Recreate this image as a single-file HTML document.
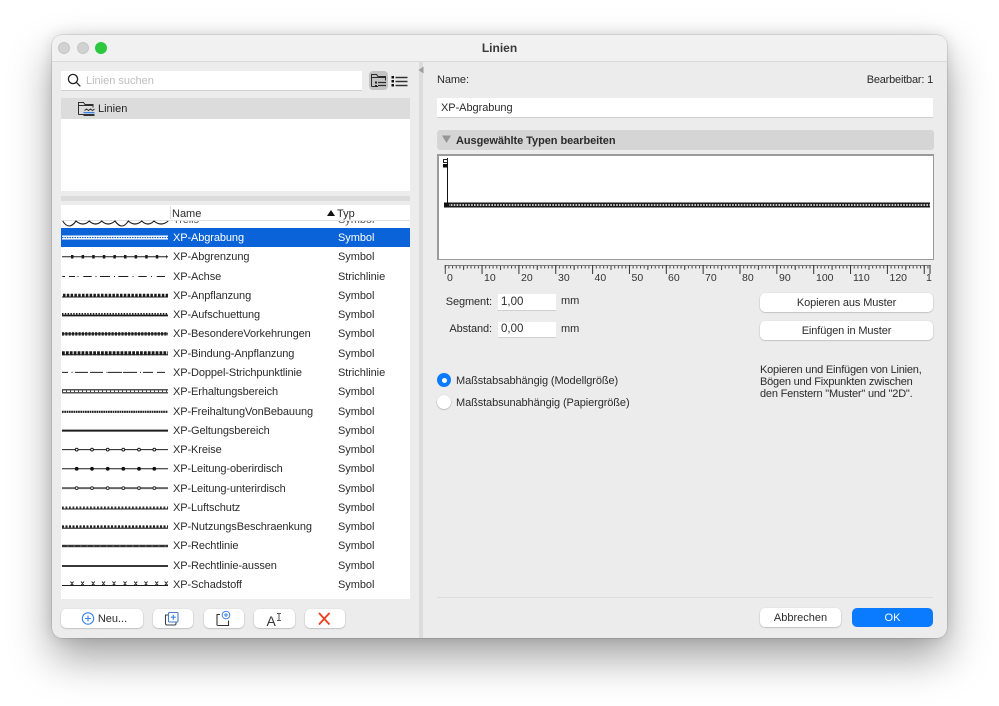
<!DOCTYPE html>
<html><head><meta charset="utf-8">
<style>
html,body{margin:0;padding:0;background:#fff;width:999px;height:706px;overflow:hidden}
body{font-family:"Liberation Sans",sans-serif;font-size:11px;color:#2b2b2b;position:relative}
div,span{position:absolute;white-space:nowrap;box-sizing:border-box}
#win{left:52px;top:35px;width:895px;height:603px;background:#ececec;border-radius:10px;box-shadow:0 0 0 .5px rgba(0,0,0,.18),0 20px 42px rgba(0,0,0,.36),0 0 14px rgba(0,0,0,.12)}
.abs{left:0;top:0}
.w{background:#fff}
.btn{background:#fff;border-radius:5px;box-shadow:0 .5px 1.5px rgba(0,0,0,.3);text-align:center;line-height:21px;color:#2b2b2b}
.inp{background:#fff;box-shadow:0 1px 0 #cfcfcf;line-height:16px;padding-left:3px;font-size:11.5px}
.r{left:61px;width:349px;height:19px;line-height:21px}
.n{left:112px;top:0;letter-spacing:-.1px}
.t{left:277px;top:0;letter-spacing:-.05px}
.lab{line-height:14px;letter-spacing:-.1px}
.rl{font-size:10.5px;line-height:14px;color:#333;top:271px}
</style></head><body>
<div id="win"></div>
<div style="left:52px;top:35px;width:895px;height:27px;background:#f1f1f1;border-radius:10px 10px 0 0;border-bottom:1px solid #dadada;text-align:center;font-weight:bold;font-size:12px;line-height:26px;color:#3a3a3a">Linien</div>
<div style="left:58px;top:42px;width:12px;height:12px;border-radius:50%;background:#d2d2d2;border:.5px solid #c6c6c6"></div>
<div style="left:77px;top:42px;width:12px;height:12px;border-radius:50%;background:#d2d2d2;border:.5px solid #c6c6c6"></div>
<div style="left:95px;top:42px;width:12px;height:12px;border-radius:50%;background:#2bc840"></div>

<!-- splitter -->
<div style="left:419px;top:62px;width:4px;height:576px;background:#dcdcdc"></div>
<svg class="abs" style="position:absolute" width="999" height="706">
<path d="M418.500 70l5-3.500v7z" fill="#9d9d9d"/>
</svg>

<!-- search -->
<div class="w" style="left:61px;top:71px;width:301px;height:19px;box-shadow:0 1px 0 #cfcfcf"></div>
<div style="left:86px;top:74px;line-height:14px;color:#bdbdbd;letter-spacing:0">Linien suchen</div>
<svg style="position:absolute;left:66px;top:72px" width="16" height="16" fill="none" stroke="#222" stroke-width="1.300"><circle cx="7" cy="7" r="4.600"/><path d="M10.300 10.300l4 4"/></svg>
<div style="left:369px;top:71px;width:19px;height:19px;border-radius:4px;background:#c3c3c3"></div>
<svg style="position:absolute;left:369px;top:71px" width="40" height="19" fill="none" stroke="#2c2c2c">
<path d="M2.500 15.500v-12h5l1.500 2h7.500v4M2.500 6.500h14M9 15.500h-6.500" stroke-width="1"/>
<path d="M9 11.500h8M9 14.500h8" stroke-width="1.200"/><rect x="6" y="10.500" width="2" height="2" fill="#222" stroke="none"/><rect x="6" y="14" width="2" height="2" fill="#222" stroke="none"/>
<path d="M26.500 6.500h12M26.500 10.500h12M26.500 14.500h12" stroke-width="1.500" stroke="#333"/>
<rect x="22.500" y="5" width="2.500" height="2.500" fill="#111" stroke="none"/><rect x="22.500" y="9" width="2.500" height="2.500" fill="#111" stroke="none"/><rect x="22.500" y="13" width="2.500" height="2.500" fill="#111" stroke="none"/>
</svg>

<!-- tree -->
<div class="w" style="left:61px;top:98px;width:349px;height:93px"></div>
<div style="left:61px;top:98px;width:349px;height:21px;background:#dcdcdc"></div>
<svg style="position:absolute;left:77px;top:100px" width="20" height="18" fill="none" stroke="#2f2f2f" stroke-width="1">
<path d="M1.500 14.500v-12h5l1.500 2h8v3M1.500 14.500h5M1.500 5.500h14"/>
<path d="M7.500 10.500l2-1.500 2 1.500 2-1.500 2 1.500 2-1.500"/>
<rect x="6.500" y="12" width="11" height="1.300" fill="#3d83e6" stroke="none"/><rect x="6.500" y="14" width="11" height="2" fill="#333" stroke="none"/>
</svg>
<div style="left:98px;top:102px;line-height:15px;letter-spacing:0;color:#222">Linien</div>
<div style="left:61px;top:196px;width:349px;height:5px;background:#dcdcdc"></div>

<!-- list -->
<div class="w" style="left:61px;top:205px;width:349px;height:394px"></div>
<div style="left:61px;top:220px;width:349px;height:1px;background:#e2e2e2"></div>
<div style="left:172px;top:207px;line-height:14px;letter-spacing:0">Name</div>
<div style="left:170px;top:206px;width:1px;height:13px;background:#dedede"></div>
<div style="left:337px;top:207px;line-height:14px;letter-spacing:0">Typ</div>
<svg style="position:absolute;left:326px;top:209px" width="10" height="8"><path d="M1 7l4-6 4 6z" fill="#111"/></svg>

<div style="left:61px;top:221px;width:349px;height:378px;overflow:hidden">
<div class="r" style="left:0;top:-11.300px;color:#555"><span class="n">Trelis</span><span class="t">Symbol</span></div>
<div style="left:0;top:7px;width:349px;height:19px;background:#0a63d8"></div>
</div>
<div class="r" style="top:228px;color:#fff"><span class="n">XP-Abgrabung</span><span class="t">Symbol</span></div>
<div class="r" style="top:247.300px"><span class="n">XP-Abgrenzung</span><span class="t">Symbol</span></div>
<div class="r" style="top:266.600px"><span class="n">XP-Achse</span><span class="t">Strichlinie</span></div>
<div class="r" style="top:285.800px"><span class="n">XP-Anpflanzung</span><span class="t">Symbol</span></div>
<div class="r" style="top:305.100px"><span class="n">XP-Aufschuettung</span><span class="t">Symbol</span></div>
<div class="r" style="top:324.400px"><span class="n">XP-BesondereVorkehrungen</span><span class="t">Symbol</span></div>
<div class="r" style="top:343.700px"><span class="n">XP-Bindung-Anpflanzung</span><span class="t">Symbol</span></div>
<div class="r" style="top:362.900px"><span class="n">XP-Doppel-Strichpunktlinie</span><span class="t">Strichlinie</span></div>
<div class="r" style="top:382.200px"><span class="n">XP-Erhaltungsbereich</span><span class="t">Symbol</span></div>
<div class="r" style="top:401.500px"><span class="n">XP-FreihaltungVonBebauung</span><span class="t">Symbol</span></div>
<div class="r" style="top:420.800px"><span class="n">XP-Geltungsbereich</span><span class="t">Symbol</span></div>
<div class="r" style="top:440px"><span class="n">XP-Kreise</span><span class="t">Symbol</span></div>
<div class="r" style="top:459.300px"><span class="n">XP-Leitung-oberirdisch</span><span class="t">Symbol</span></div>
<div class="r" style="top:478.600px"><span class="n">XP-Leitung-unterirdisch</span><span class="t">Symbol</span></div>
<div class="r" style="top:497.900px"><span class="n">XP-Luftschutz</span><span class="t">Symbol</span></div>
<div class="r" style="top:517.100px"><span class="n">XP-NutzungsBeschraenkung</span><span class="t">Symbol</span></div>
<div class="r" style="top:536.400px"><span class="n">XP-Rechtlinie</span><span class="t">Symbol</span></div>
<div class="r" style="top:555.700px"><span class="n">XP-Rechtlinie-aussen</span><span class="t">Symbol</span></div>
<div class="r" style="top:575px"><span class="n">XP-Schadstoff</span><span class="t">Symbol</span></div>

<!-- samples -->
<svg style="position:absolute;left:0;top:0" width="420" height="706" fill="none" stroke="#1c1c1c">
<!-- scallops -->
<path d="M62.700 221Q69 231 76 221Q83 227 89.300 221Q95.500 227 101.700 221Q108 227 115 221Q122 231 128.300 221Q135 227 141.700 221Q148 227 154 221Q161 227 168.300 221" stroke-width="1.100"/>
<!-- Abgrabung -->
<path d="M62 237.500h106" stroke="#fff" stroke-width="4"/>
<path d="M62 237.500h106" stroke="#0a63d8" stroke-width="1.300" stroke-dasharray="1.500 1"/>
<!-- Abgrenzung -->
<path d="M62 256.800h106" stroke-width="1"/>
<path d="M71 256.800h96" stroke-width="3.500" stroke-dasharray="2.500 8.100"/>
<!-- Achse -->
<path d="M62.300 276.500h2.700M69 276.500h6M77.500 276.500h1M83.300 276.500h8.400M95.500 276.500h1M100 276.500h10M114 276.500h1M118.300 276.500h10M132.500 276.500h1M138.300 276.500h8.400M151 276.500h1M156.700 276.500h8.300" stroke-width="1"/>
<!-- Anpflanzung -->
<path d="M62 297h106" stroke-width="1"/>
<path d="M63 295.300h105" stroke-width="3" stroke-dasharray="2.500 1.300"/>
<!-- Aufschuettung -->
<path d="M62 315.500h106" stroke-width="1.800"/>
<path d="M62 313.800h106" stroke-width="1.500" stroke-dasharray="1.500 1.300"/>
<!-- Besondere -->
<path d="M62 333.900h106" stroke-width="3.500" stroke-dasharray="2.200 1.100" stroke="#333"/>
<path d="M62 333.900h106" stroke-width="1" stroke="#111"/>
<!-- Bindung -->
<path d="M62 353.200h106" stroke-width="4" stroke-dasharray="2.800 1.100"/>
<path d="M62 354.800h106" stroke-width="1"/>
<!-- Doppel -->
<path d="M62 372.400h6M71.500 372.400h1M75 372.400h13M90 372.400h13M106.500 372.400h1M108 372.400h14M123 372.400h14M140 372.400h1M143 372.400h10M157 372.400h8" stroke-width="1"/>
<!-- Erhaltung -->
<path d="M62 389.800h106M62 392.800h106" stroke-width="1.200"/>
<path d="M62 391.300h106" stroke-width="1.500" stroke-dasharray="1 3" stroke="#444"/>
<!-- Freihaltung -->
<path d="M62 411.800h106" stroke-width="2.200" stroke-dasharray="1.700 .6"/>
<!-- Geltung -->
<path d="M62 430.600h106" stroke-width="2"/>
<!-- Kreise -->
<path d="M62 449.600h106" stroke-width="1"/>
<g fill="#fff" stroke-width="1"><circle cx="76.700" cy="449.600" r="1.400"/><circle cx="92" cy="449.600" r="1.400"/><circle cx="107.700" cy="449.600" r="1.400"/><circle cx="123.300" cy="449.600" r="1.400"/><circle cx="139" cy="449.600" r="1.400"/><circle cx="154.300" cy="449.600" r="1.400"/></g>
<!-- oberirdisch -->
<path d="M62 468.800h106" stroke-width="1"/>
<g fill="#111" stroke="none"><circle cx="76.700" cy="468.800" r="1.900"/><circle cx="92" cy="468.800" r="1.900"/><circle cx="107.700" cy="468.800" r="1.900"/><circle cx="123.300" cy="468.800" r="1.900"/><circle cx="139" cy="468.800" r="1.900"/><circle cx="154.300" cy="468.800" r="1.900"/></g>
<!-- unterirdisch -->
<path d="M62 488.100h106" stroke-width="2" stroke="#666"/>
<g fill="#fff" stroke-width="1" stroke="#333"><circle cx="76.700" cy="488.100" r="1.400"/><circle cx="92" cy="488.100" r="1.400"/><circle cx="107.700" cy="488.100" r="1.400"/><circle cx="123.300" cy="488.100" r="1.400"/><circle cx="139" cy="488.100" r="1.400"/><circle cx="154.300" cy="488.100" r="1.400"/></g>
<!-- Luftschutz -->
<path d="M62 509h106" stroke-width=".9"/>
<path d="M62 507.500h106" stroke-width="2" stroke-dasharray="1.800 1.700" stroke="#333"/>
<!-- Nutzung -->
<path d="M62 528.200h106" stroke-width="1.200"/>
<path d="M62 526.500h106" stroke-width="2.200" stroke-dasharray="2 1.500"/>
<!-- Rechtlinie -->
<path d="M62 546h106" stroke-width="2.400" stroke="#555"/>
<path d="M62 546h106" stroke-width="1" stroke-dasharray="5 1.500" stroke="#111"/>
<!-- aussen -->
<path d="M62 566h106" stroke-width="1.700"/>
<!-- Schadstoff -->
<path d="M62 585.500h106" stroke-width="1"/>
<path d="M70.500 581.500l3 4M73.500 581.500l-3 4M81 581.500l3 4M84 581.500l-3 4M91.700 581.500l3 4M94.700 581.500l-3 4M102 581.500l3 4M105 581.500l-3 4M112.500 581.500l3 4M115.500 581.500l-3 4M123.500 581.500l3 4M126.500 581.500l-3 4M134.200 581.500l3 4M137.200 581.500l-3 4M144.500 581.500l3 4M147.500 581.500l-3 4M155.200 581.500l3 4M158.200 581.500l-3 4M164.700 581.500l3 4M167.700 581.500l-3 4" stroke-width="1"/>
</svg>

<!-- bottom left buttons -->
<div class="btn" style="left:61px;top:609px;width:82px;height:19px;padding-left:21px;letter-spacing:0">Neu...</div>
<div class="btn" style="left:153px;top:609px;width:40px;height:19px"></div>
<div class="btn" style="left:204px;top:609px;width:40px;height:19px"></div>
<div class="btn" style="left:254px;top:609px;width:41px;height:19px"></div>
<div class="btn" style="left:305px;top:609px;width:40px;height:19px"></div>
<div style="left:266.500px;top:613px;font-size:14px;line-height:16px;color:#333;letter-spacing:0">A</div>
<svg style="position:absolute;left:0;top:0" width="420" height="706" fill="none">
<circle cx="88" cy="618.500" r="5.700" stroke="#3b82e8" stroke-width="1.100"/><path d="M85 618.500h6M88 615.500v6" stroke="#3b82e8" stroke-width="1.100"/>
<path d="M168.500 615h-3v8.500a1.500 1.500 0 0 0 1.500 1.500h7.500a1.500 1.500 0 0 0 1.500-1.500v-1.500" stroke="#39424e" stroke-width="1.100"/>
<rect x="168.500" y="612.500" width="9.500" height="9.500" rx="1" stroke="#4a7fc4" stroke-width="1.100" fill="#fff"/><path d="M170.800 617.200h5M173.300 614.700v5" stroke="#3b82e8" stroke-width="1.100"/>
<path d="M217 625.500v-11h3M217.500 625.500h11v-5" stroke="#333" stroke-width="1.100"/>
<circle cx="226" cy="615" r="3.800" stroke="#3b82e8" stroke-width="1" fill="#fff"/><path d="M224 615h4M226 613v4" stroke="#3b82e8" stroke-width="1"/>
<path d="M277 613.500h4M277 620.500h4M279 613.500v7" stroke="#555" stroke-width="1"/>
<path d="M319 613l10.500 11.500M329.500 613L319 624.500" stroke="#ef3d1e" stroke-width="1.800"/>
</svg>

<!-- right panel -->
<div class="lab" style="left:437px;top:73px;">Name:</div>
<div class="lab" style="right:66px;top:73px;letter-spacing:-.2px">Bearbeitbar: 1</div>
<div class="inp" style="left:437px;top:98px;width:496px;height:19px;line-height:21px;font-size:11px;padding-left:4px;letter-spacing:-.05px">XP-Abgrabung</div>
<div style="left:437px;top:130px;width:497px;height:20px;background:#d5d5d5;border-radius:3px"></div>
<svg style="position:absolute;left:442px;top:135px" width="10" height="9"><path d="M0 .5h9l-4.500 7.500z" fill="#969696"/></svg>
<div style="left:456px;top:133.500px;line-height:14px;font-weight:bold;letter-spacing:-.06px;color:#2b2b2b">Ausgewählte Typen bearbeiten</div>

<div class="w" style="left:437px;top:154px;width:497px;height:106px;border:2px solid #9a9a9a;border-right-width:1.500px;border-bottom-width:1.500px"></div>
<svg style="position:absolute;left:0;top:0" width="999" height="706" fill="none">
<defs>
<pattern id="minor" x="444.700" y="265" width="3.685" height="4" patternUnits="userSpaceOnUse"><rect width="1" height="3.500" fill="#444"/></pattern>
<pattern id="mid" x="463.100" y="265" width="36.850" height="5" patternUnits="userSpaceOnUse"><rect width="1" height="5" fill="#444"/></pattern>
<pattern id="maj" x="444.700" y="265" width="36.850" height="9" patternUnits="userSpaceOnUse"><rect width="1" height="9" fill="#333"/></pattern>
</defs>
<path d="M447.500 158v46" stroke="#111" stroke-width="1"/>
<rect x="443.500" y="159.500" width="4" height="3" stroke="#222" stroke-width="1" fill="#fff"/>
<rect x="443" y="164" width="5" height="3.500" fill="#111"/>
<path d="M445 205h485" stroke="#1a1a1a" stroke-width="5"/>
<path d="M445 205h485" stroke="#fff" stroke-width="1.500" stroke-dasharray="1.600 1.300"/>
<path d="M444 202.500h5v5h-5z" fill="#111"/>
<rect x="444.700" y="265" width="486" height="4" fill="url(#minor)"/>
<rect x="444.700" y="265" width="486" height="5" fill="url(#mid)"/>
<rect x="444.700" y="265" width="486" height="1" fill="#777"/>
<rect x="444.700" y="265" width="486" height="9" fill="url(#maj)"/>
<rect x="929.500" y="265" width="1" height="9" fill="#333"/>
</svg>
<div class="rl" style="left:447px">0</div>
<div class="rl" style="left:484px">10</div>
<div class="rl" style="left:521px">20</div>
<div class="rl" style="left:558px">30</div>
<div class="rl" style="left:594.500px">40</div>
<div class="rl" style="left:631.500px">50</div>
<div class="rl" style="left:668px">60</div>
<div class="rl" style="left:705px">70</div>
<div class="rl" style="left:742px">80</div>
<div class="rl" style="left:779px">90</div>
<div class="rl" style="left:816px">100</div>
<div class="rl" style="left:853px">110</div>
<div class="rl" style="left:889.500px">120</div>
<div class="rl" style="left:926px">1</div>

<div class="lab" style="right:507px;top:295px">Segment:</div>
<div class="inp" style="left:498px;top:294px;width:58px;height:16px">1,00</div>
<div class="lab" style="left:561px;top:294px">mm</div>
<div class="lab" style="right:507px;top:322px">Abstand:</div>
<div class="inp" style="left:498px;top:322px;width:58px;height:15px;line-height:15px">0,00</div>
<div class="lab" style="left:561px;top:322px">mm</div>

<div style="left:437px;top:373px;width:14px;height:14px;border-radius:50%;background:#0a7aff"></div>
<div style="left:441.500px;top:377.500px;width:5px;height:5px;border-radius:50%;background:#fff"></div>
<div style="left:437px;top:395px;width:14px;height:14px;border-radius:50%;background:#fff;box-shadow:0 .5px 1.500px rgba(0,0,0,.35)"></div>
<div class="lab" style="left:456px;top:373.500px">Maßstabsabhängig (Modellgröße)</div>
<div class="lab" style="left:456px;top:395.500px">Maßstabsunabhängig (Papiergröße)</div>

<div class="btn" style="left:760px;top:293px;width:173px;height:19px;letter-spacing:-.12px">Kopieren aus Muster</div>
<div class="btn" style="left:760px;top:321px;width:173px;height:19px;letter-spacing:-.12px">Einfügen in Muster</div>
<div style="left:760px;top:364px;line-height:12px;letter-spacing:-.2px">Kopieren und Einfügen von Linien,<br>Bögen und Fixpunkten zwischen<br>den Fenstern "Muster" und "2D".</div>

<div style="left:437px;top:596.500px;width:496px;height:1.500px;background:#dcdcdc"></div>
<div class="btn" style="left:760px;top:608px;width:81px;height:19px;letter-spacing:0">Abbrechen</div>
<div class="btn" style="left:852px;top:608px;width:81px;height:19px;background:#0a7aff;color:#fff;box-shadow:none;letter-spacing:0">OK</div>
</body></html>
